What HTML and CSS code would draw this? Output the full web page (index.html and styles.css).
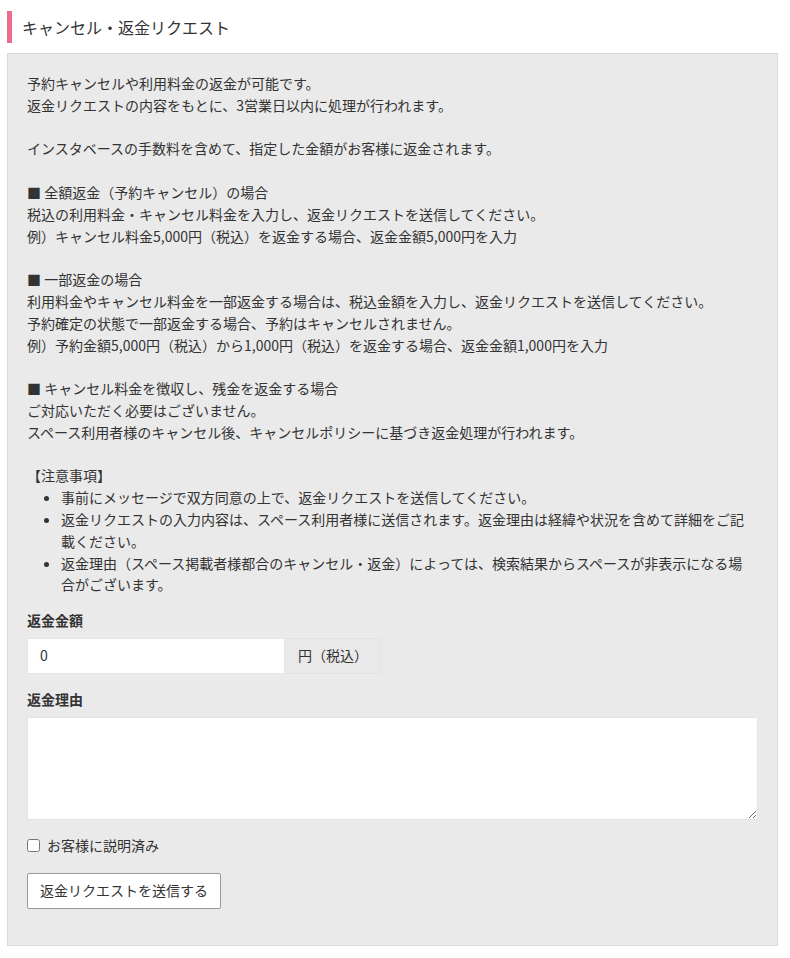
FILE: index.html
```html
<!DOCTYPE html>
<html lang="ja">
<head>
    <meta charset="UTF-8">
    <meta name="viewport" content="width=device-width, initial-scale=1.0">
    <title>キャンセル・返金リクエスト</title>
    <link rel="stylesheet" href="styles.css">
</head>
<body>
    <div class="page">
        <h2 class="section-title">キャンセル・返金リクエスト</h2>

        <div class="refund-panel">
            <div class="notes">
                <p>予約キャンセルや利用料金の返金が可能です。<br>返金リクエストの内容をもとに、3営業日以内に処理が行われます。</p>
                <p>インスタベースの手数料を含めて、指定した金額がお客様に返金されます。</p>
                <p>■ 全額返金（予約キャンセル）の場合<br>税込の利用料金・キャンセル料金を入力し、返金リクエストを送信してください。<br>例）キャンセル料金5,000円（税込）を返金する場合、返金金額5,000円を入力</p>
                <p>■ 一部返金の場合<br>利用料金やキャンセル料金を一部返金する場合は、税込金額を入力し、返金リクエストを送信してください。<br>予約確定の状態で一部返金する場合、予約はキャンセルされません。<br>例）予約金額5,000円（税込）から1,000円（税込）を返金する場合、返金金額1,000円を入力</p>
                <p>■ キャンセル料金を徴収し、残金を返金する場合<br>ご対応いただく必要はございません。<br>スペース利用者様のキャンセル後、キャンセルポリシーに基づき返金処理が行われます。</p>
                <p class="caution-title">【注意事項】</p>
                <ul class="caution-list">
                    <li>事前にメッセージで双方同意の上で、返金リクエストを送信してください。</li>
                    <li>返金リクエストの入力内容は、スペース利用者様に送信されます。返金理由は経緯や状況を含めて詳細をご記載ください。</li>
                    <li>返金理由（スペース掲載者様都合のキャンセル・返金）によっては、検索結果からスペースが非表示になる場合がございます。</li>
                </ul>
            </div>

            <form id="refundForm">
                <div class="field">
                    <label class="field-label" for="amount">返金金額</label>
                    <div class="input-group">
                        <input type="text" id="amount" value="0">
                        <span class="input-addon">円（税込）</span>
                    </div>
                </div>

                <div class="field">
                    <label class="field-label" for="reason">返金理由</label>
                    <textarea id="reason"></textarea>
                </div>

                <label class="check-row">
                    <input type="checkbox" id="explained">
                    お客様に説明済み
                </label>

                <button type="submit" class="submit-btn">返金リクエストを送信する</button>
            </form>
        </div>
    </div>
</body>
</html>
```

FILE: styles.css
```css
body { margin: 0; background: #fff; color: #333; font-family: "Noto Sans CJK JP", "Noto Sans", sans-serif; font-size: 14px; line-height: 21.8px; }
.page { padding: 11px 12px 0 7px; }

.section-title { margin: 0 0 10px; border-left: 5px solid #ec6c8c; padding-left: 10px; font-size: 16px; font-weight: normal; line-height: 32px; color: #333; }

.refund-panel { background: #eaeaea; border: 1px solid #d9d9d9; padding: 19px 19px 36px; }

.notes p { margin: 0 0 21.8px; }
.notes .caution-title { margin: 0; }
.caution-list { margin: 0 0 14px; padding: 0 8px 0 34px; }

.field { margin-bottom: 15px; }
.field-label { display: block; font-weight: bold; margin-bottom: 6px; }

.input-group { display: flex; width: 354px; height: 36px; }
.input-group input { width: 258px; box-sizing: border-box; border: 1px solid #e6e6e6; background: #fff; padding: 0 12px; font: inherit; color: #333; margin: 0; }
.input-addon { flex: 1; display: flex; align-items: center; padding-left: 13px; background: #e9e9e9; border: 1px solid #e2e2e2; border-left: none; }

textarea { display: block; width: 100%; height: 103px; box-sizing: border-box; border: 1px solid #e3e3e3; background: #fff; margin: 0; font: inherit; }

.check-row { display: flex; align-items: center; gap: 7px; margin-bottom: 16px; }
.check-row input { margin: 0; width: 13px; height: 13px; }

.submit-btn { height: 36px; padding: 0 12px; background: #fff; border: 1px solid #999; border-radius: 2px; font: inherit; color: #333; cursor: pointer; }
```
